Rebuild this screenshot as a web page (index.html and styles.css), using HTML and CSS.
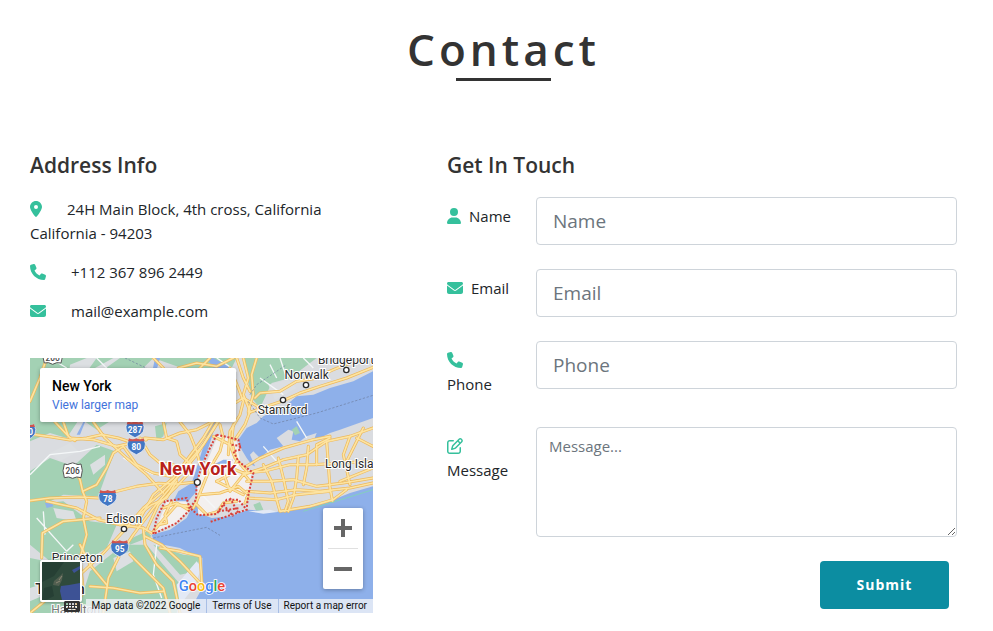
FILE: index.html
```html
<!DOCTYPE html>
<html lang="en">
<head>
<meta charset="utf-8">
<meta name="viewport" content="width=device-width, initial-scale=1">
<title>Contact</title>
<link rel="stylesheet" href="styles.css">
</head>
<body>
<svg class="sprite" aria-hidden="true">
  <symbol id="i-pin" viewBox="0 0 384 512"><path d="M215.7 499.2C267 435 384 279.4 384 192C384 86 298 0 192 0S0 86 0 192c0 87.4 117 243 168.3 307.2c12.3 15.3 35.1 15.3 47.4 0zM192 128a64 64 0 1 1 0 128 64 64 0 1 1 0-128z"/></symbol>
  <symbol id="i-phone" viewBox="0 0 512 512"><path d="M164.9 24.6c-7.7-18.6-28-28.5-47.4-23.2l-88 24C12.1 30.2 0 46 0 64C0 311.4 200.6 512 448 512c18 0 33.8-12.1 38.6-29.5l24-88c5.3-19.4-4.6-39.7-23.2-47.4l-96-40c-16.3-6.8-35.2-2.1-46.3 11.6L304.7 368C234.3 334.7 177.3 277.7 144 207.3L193.3 167c13.7-11.2 18.4-30 11.6-46.3l-40-96z"/></symbol>
  <symbol id="i-mail" viewBox="0 0 512 512"><path d="M48 64C21.5 64 0 85.5 0 112c0 15.1 7.1 29.3 19.2 38.4L236.8 313.6c11.4 8.5 27 8.5 38.4 0L492.8 150.4c12.1-9.1 19.2-23.3 19.2-38.4c0-26.5-21.5-48-48-48H48zM0 176V384c0 35.3 28.7 64 64 64H448c35.3 0 64-28.7 64-64V176L294.4 339.2c-22.8 17.1-54 17.1-76.8 0L0 176z"/></symbol>
  <symbol id="i-user" viewBox="0 0 448 512"><path d="M224 256A128 128 0 1 0 224 0a128 128 0 1 0 0 256zm-45.7 48C79.8 304 0 383.8 0 482.3C0 498.7 13.3 512 29.7 512H418.3c16.4 0 29.7-13.3 29.7-29.7C448 383.8 368.2 304 269.7 304H178.3z"/></symbol>
  <symbol id="i-edit" viewBox="0 0 512 512"><path d="M441 58.9L453.1 71c9.4 9.4 9.4 24.6 0 33.9L424 134.1 377.9 88 407 58.9c9.4-9.4 24.6-9.4 33.9 0zM209.8 256.2L344 121.9 390.1 168 255.8 302.2c-2.9 2.9-6.5 5-10.4 6.1l-58.5 16.7 16.7-58.5c1.1-3.9 3.2-7.5 6.1-10.4zM373.1 25L175.8 222.2c-8.7 8.7-15 19.4-18.3 31.1l-28.6 100c-2.4 8.4-.1 17.4 6.1 23.6s15.2 8.5 23.6 6.1l100-28.6c11.8-3.4 22.5-9.7 31.1-18.3L487 138.9c28.1-28.1 28.1-73.7 0-101.8L474.9 25C446.8-3.1 401.2-3.1 373.1 25zM88 64C39.4 64 0 103.4 0 152V424c0 48.6 39.4 88 88 88H360c48.6 0 88-39.4 88-88V312c0-13.3-10.7-24-24-24s-24 10.7-24 24V424c0 22.1-17.9 40-40 40H88c-22.1 0-40-17.9-40-40V152c0-22.1 17.9-40 40-40H200c13.3 0 24-10.7 24-24s-10.7-24-24-24H88z"/></symbol>
</svg>

<main class="contact">
  <header class="contact-head">
    <h1>Contact</h1>
    <span class="rule"></span>
  </header>

  <div class="columns">
    <section class="address">
      <h2>Address Info</h2>
      <p><svg class="icon narrow"><use href="#i-pin"/></svg>24H Main Block, 4th cross, California<br>California - 94203</p>
      <p><svg class="icon"><use href="#i-phone"/></svg>+112 367 896 2449</p>
      <p><svg class="icon"><use href="#i-mail"/></svg>mail@example.com</p>

      <div class="map">
        <svg class="map-art" viewBox="0 0 1029 765" preserveAspectRatio="xMidYMid slice" role="img" aria-label="Map of New York">
          <defs>
            <g id="shield">
              <path d="M-22-20Q-11-14 0-20Q11-14 22-20Q31-5 25 8Q18 20 0 27Q-18 20-25 8Q-31-5-22-20Z" fill="#4277c4" stroke="#fff" stroke-width="2"/>
              <path d="M-22-22Q-11-16 0-22Q11-16 22-22L25-13H-25Z" fill="#cf554f"/>
            </g>
            <g id="roads" fill="none" stroke-linejoin="round" stroke-linecap="round">
              <path d="M0 228L60 236L120 246L170 240L215 230L265 240L310 255L345 240L400 245L450 225L500 215L550 190"/>
              <path d="M100 192L115 235L135 248M0 130L30 60L50 0M75 192L120 240L190 245L260 265L350 245"/>
              <path d="M0 428L60 420L150 417L205 420L260 400L320 385L385 376L440 378L500 372"/>
              <path d="M50 430L140 450L205 485L270 500L340 510L365 525"/>
              <path d="M125 320L150 365L158 400L200 380L230 330L250 285L280 265L320 320L370 345L420 355"/>
              <path d="M158 400L170 430L160 480L170 530L150 600L160 700L130 765M35 600L37 525L100 490L210 480"/>
              <path d="M0 765L80 700L150 650L220 585L280 520L340 450L400 400L450 350L500 290L550 215L590 150L640 120L690 150"/>
              <path d="M220 765L235 660L270 590L310 530L370 450L420 390L460 330L520 260L570 180"/>
              <path d="M320 500L370 410L430 360L475 300L520 240L550 190M350 515L385 440L440 385L490 330"/>
              <path d="M270 500L320 475L365 440L410 420L440 370M340 510L345 560L380 620L430 670L450 765M345 535L395 560L450 610L515 680M300 590L350 640L400 690L420 765"/>
              <path d="M180 685L250 690L330 705L400 700M150 560L180 620L230 680M390 570L450 580L510 595L517 690"/>
              <path d="M190 192L225 240L290 300L350 350L400 405M400 192L410 240L440 250L450 290L490 325M330 240L360 290L390 315L430 320M450 192L480 230L500 280L510 320"/>
              <path d="M370 0L400 30M445 30L500 15L560 25L610 0M510 30L540 0M600 30L625 90L640 130L630 170L600 220L595 290"/>
              <path d="M640 0L655 60L640 110L660 160L645 200L615 245M680 0L665 50L670 110L655 160M620 0L640 60L660 100"/>
              <path d="M655 165L710 145L760 128L810 105L870 85L950 60L1029 28M675 120L690 105L750 100L800 70L850 62L910 35L960 15"/>
              <path d="M570 200L580 240L570 280L540 330L520 380L500 430L490 450M610 200L605 250L620 310L600 350L560 370M550 235L600 260L615 300L650 340"/>
              <path d="M545 320L590 325L640 345L660 370M510 410L570 405L625 385L655 410L645 435M560 370L600 390L640 410M575 330L600 400L640 350M500 440L530 470L565 460L580 435L620 430"/>
              <path d="M640 350L700 330L760 305L830 290L890 250L960 235L1029 210M640 345L700 340L780 320L850 320L930 315L1029 310"/>
              <path d="M650 370L720 370L790 365L860 385L940 375L1029 360M650 400L720 405L800 395L870 400L960 390L1029 375M650 420L740 425L800 410L900 400"/>
              <path d="M700 320L725 370L740 425L750 460M745 300L760 360L775 430L765 460M835 265L830 330L820 380M890 250L895 320L900 390L908 430M960 235L940 290L960 380M1000 210L970 270L950 310M805 295L800 360L790 420L775 460M750 460L840 445L910 425L950 395"/>
              <path d="M640 330L690 300L760 270L850 245L900 235M860 320L860 260L900 240M930 370L1029 330M980 240L1029 265"/>
              <path d="M370 520L400 485L440 440L480 445M385 500L410 495L405 470L425 430M400 450L440 435L475 455"/>
            </g>
          </defs>
          <rect width="1029" height="765" fill="#dadce0"/>
          <g fill="#a3d1b4">
            <path d="M0 0H370L330 40L300 100L240 190L200 215L150 180L110 240L60 225L0 250Z"/>
            <path d="M370 0H620L600 40L500 50L440 25Z M640 0H860L780 60L725 75L690 150L665 120Z"/>
            <path d="M0 340L60 300L130 325L200 260L255 280L230 345L205 415L100 410L0 460Z"/>
            <path d="M0 440L100 430L180 490L260 500L230 570L150 620L60 610L0 560Z"/>
            <path d="M180 640L280 560L350 560L400 620L460 690L440 765H140Z M0 600L100 620L160 660L100 765H0Z"/>
            <path d="M370 560L460 590L510 595L500 640L450 650Z M295 545L350 520L365 535L300 560Z"/>
            <path d="M375 205L410 195L400 235L380 250Z M395 325L410 310L418 335L400 345Z M670 440L690 432L700 455L680 462Z"/>
          </g>
          <g fill="#dcdfe2">
            <path d="M120 20L170 0H200L150 70L110 120ZM60 285L120 255L145 280L90 310ZM715 80L775 65L800 90L735 125ZM180 320L225 290L225 320L190 350Z"/>
            <path d="M70 450L130 460L140 490L80 480ZM250 600L300 580L310 610L260 640ZM0 690L60 670L70 700L0 730ZM195 30L250 0H270L220 35Z"/>
          </g>
          <g fill="#8eb0ea">
            <path d="M1029 40L970 70L900 90L850 110L800 115L765 145L700 175L680 195L650 210L625 245L635 275L650 300L665 320L675 325L660 290L670 280L690 300L720 275L760 265L740 240L775 215L790 220L785 245L810 250L830 235L860 225L850 250L900 225L930 215L1029 180Z"/>
            <path d="M365 530L420 515L470 480L490 440L500 425L505 465L545 480L600 475L655 455L740 462L800 450L910 425L960 405L1029 385V765H480L500 720L517 690V600L490 590L450 570L400 560L370 545Z"/>
            <path d="M540 192H560L535 270L505 345L500 400L470 435L430 430L445 400L485 375L500 330L525 250Z"/>
            <path d="M540 330L570 305L605 310L585 325L550 340ZM160 192L170 180L150 230L140 230ZM380 35L365 50L375 0H390ZM45 435L65 430L70 445L50 450ZM530 0H550L605 30H550Z"/>
          </g>
          <path d="M375 520L410 430L470 430L475 460L430 500ZM500 375L540 290L565 230L620 250L630 310L665 345L655 410L640 440L580 430L545 470L505 470Z" fill="#f3f0ef"/>
          <path d="M550 320L580 305H610L590 322Z" fill="#8eb0ea"/>
          <path d="M785 215L800 205L810 225L795 232Z" fill="#a3d1b4"/>
          <path d="M655 460L720 455L742 462L700 467ZM500 610L515 630L490 690L450 740L440 680Z" fill="#e3e9f5"/>
          <g fill="none" stroke="#f4f7f8" stroke-width="4">
            <path d="M0 350L60 290L150 280L210 265M200 0L250 50M40 460L45 530M110 580L130 560M280 300L330 330L370 350M380 560L370 650L395 720M520 415L555 450M800 190L830 240M700 265L740 310M690 60L760 110M720 20L740 60M560 0L620 40M20 480L110 580M750 0L770 60M820 0L850 30M60 0L110 30"/>
          </g>
          <use href="#roads" stroke="#edb95b" stroke-width="9"/>
          <use href="#roads" stroke="#fde4a2" stroke-width="5"/>
          <g fill="none" stroke="#6c7d9e" stroke-width="2" stroke-dasharray="7 5">
            <path d="M370 540L530 508L570 532M660 110L680 80L770 20M655 130L690 180L730 198L860 165L1029 112M285 0L380 45"/>
          </g>
          <g fill="none" stroke="#d9413b" stroke-width="6" stroke-dasharray="6 5">
            <path d="M370 528L380 480L405 430L470 420L480 455L440 495L370 528M560 230L535 280L515 325L500 375L498 425L480 450L505 472L560 468L590 425L625 425L650 455L540 492M560 230L625 245L632 275L610 280L625 310L670 345L655 410L650 450M565 460L630 450M580 440L610 475M600 420L625 465M605 260L635 265"/>
          </g>
          <path d="M820 460L1029 395" stroke="#84cfbd" stroke-width="3"/>
          <g class="shield-text">
            <use href="#shield" x="315" y="212"/><text x="315" y="225">287</text>
            <use href="#shield" x="319" y="263"/><text x="319" y="276">80</text>
            <use href="#shield" x="233" y="418"/><text x="233" y="431">78</text>
            <use href="#shield" x="269" y="569"/><text x="269" y="582">95</text>
            <use href="#shield" x="-10" y="220"/><text x="2" y="231">0</text>
          </g>
          <g class="route-text">
            <path d="M103 318Q112 322 120 317Q128 312 136 317Q144 322 153 318Q161 336 153 359Q140 354 128 361Q116 354 103 359Q95 338 103 318Z"/>
            <text x="128" y="348">206</text>
            <path d="M43-23Q68-15 93-23Q102-5 93 15Q80 11 68 19Q56 11 43 15Q34-5 43-23Z"/>
            <text x="68" y="8">206</text>
          </g>
          <g class="place">
            <text x="830" y="63">Norwalk</text><text x="758" y="168">Stamford</text><text x="948" y="18">Bridgeport</text>
            <text x="282" y="495">Edison</text><text x="142" y="612">Princeton</text><text x="885" y="331" class="start">Long Island</text>
            <text x="90" y="707" class="big">Trenton</text><text x="137" y="768" class="soft">Hamilton</text>
          </g>
          <g fill="#fff" stroke="#2b2b2b" stroke-width="4">
            <circle cx="828" cy="81" r="8"/><circle cx="759" cy="126" r="8"/><circle cx="949" cy="36" r="8"/><circle cx="282" cy="513" r="8"/><circle cx="502" cy="373" r="9"/>
          </g>
          <text class="city" x="504" y="351">New York</text>
          <text class="brand" x="446" y="699"><tspan fill="#4285f4">G</tspan><tspan fill="#ea4335">o</tspan><tspan fill="#fbbc05">o</tspan><tspan fill="#4285f4">g</tspan><tspan fill="#34a853">l</tspan><tspan fill="#ea4335">e</tspan></text>
        </svg>

        <div class="map-card">
          <strong>New York</strong>
          <a href="#map">View larger map</a>
        </div>
        <button class="map-thumb" type="button" aria-label="Satellite view">
          <svg viewBox="0 0 38 38"><rect width="38" height="38" fill="#2f4a3c"/><path d="M0 0H22L12 14L0 20ZM2 26L10 24L12 34L4 38H0Z" fill="#263f34"/><path d="M12 19L18 14L21 11L20 18L17 24L11 23Z" fill="#525f50"/><path d="M17 18L20 14M14 21L18 19" stroke="#8b8573"/><path d="M38 21L27 23L19 24L18 29L20 38H38ZM30 8L38 4V7L32 11Z" fill="#3d5295"/></svg>
        </button>
        <div class="map-zoom">
          <button type="button" aria-label="Zoom in"><svg viewBox="0 0 18 18"><path d="M7 0h4v7h7v4h-7v7H7v-7H0V7h7z"/></svg></button>
          <button type="button" aria-label="Zoom out"><svg viewBox="0 0 18 18"><path d="M0 7h18v4H0z"/></svg></button>
        </div>
        <div class="map-foot">
          <button type="button" aria-label="Keyboard shortcuts"><svg viewBox="0 0 16 11"><path fill-rule="evenodd" d="M1 0h14l1 1v9l-1 1H1l-1-1V1zM2 2v2h2V2zm3 0v2h2V2zm3 0v2h2V2zm3 0v2h2V2zM2 5v2h2V5zm3 0v2h2V5zm3 0v2h2V5zm3 0v2h2V5zM4 8v1h8V8z"/></svg></button>
          <span>Map data ©2022 Google</span>
          <a href="#terms">Terms of Use</a>
          <a href="#report">Report a map error</a>
        </div>
      </div>
    </section>

    <section class="touch">
      <h2>Get In Touch</h2>
      <form>
        <div class="row">
          <label for="name"><svg class="icon user"><use href="#i-user"/></svg>Name</label>
          <input id="name" type="text" placeholder="Name">
        </div>
        <div class="row">
          <label for="email"><svg class="icon"><use href="#i-mail"/></svg>Email</label>
          <input id="email" type="email" placeholder="Email">
        </div>
        <div class="row">
          <label for="phone"><svg class="icon"><use href="#i-phone"/></svg><br>Phone</label>
          <input id="phone" type="tel" placeholder="Phone">
        </div>
        <div class="row">
          <label for="message"><svg class="icon"><use href="#i-edit"/></svg><br>Message</label>
          <textarea id="message" placeholder="Message..."></textarea>
        </div>
        <button class="submit" type="submit">Submit</button>
      </form>
    </section>
  </div>
</main>
</body>
</html>
```
FILE: styles.css
```css
* { box-sizing: border-box; }

body {
  margin: 0;
  background: #fff;
  color: #212529;
  font: 15px/24px "Segoe UI", "Open Sans", "Noto Sans", sans-serif;
}

.sprite { display: none; }

.contact { padding: 20px 36px 18px 30px; }

.contact-head {
  display: flex;
  flex-direction: column;
  align-items: center;
  padding-left: 20px;
  margin-bottom: 68px;
}

h1 {
  margin: 0;
  color: #333;
  font-size: 44px;
  font-weight: 600;
  line-height: 58px;
  letter-spacing: 4px;
}

.rule {
  width: 95px;
  height: 3px;
  background: #333;
}

.columns {
  display: grid;
  grid-template-columns: 343fr 510fr;
  column-gap: 74px;
}

h2 {
  margin: 0 0 16px;
  color: #333;
  font-size: 21px;
  font-weight: 600;
  line-height: 32px;
}

p { margin: 0 0 15px; }

.icon {
  width: 16px;
  height: 16px;
  margin-right: 8px;
  fill: #35c09c;
  vertical-align: -2px;
}

.icon.user { width: 14px; }
.address .icon { margin-right: 25px; }
.address .icon.narrow { width: 12px; }

.map {
  position: relative;
  margin-top: 35px;
  overflow: hidden;
  font-family: Roboto, sans-serif;
}

.map-art {
  display: block;
  width: 100%;
}

.map-art text { text-anchor: middle; }
.shield-text { fill: #fff; font: 700 25px Roboto, sans-serif; }
.route-text { fill: #444; font: 500 25px Roboto, sans-serif; }
.route-text path { fill: #fff; stroke: #555; stroke-width: 3px; }

.place {
  fill: #2b2b2b;
  stroke: #fff;
  stroke-width: 6px;
  paint-order: stroke;
  font: 400 36px Roboto, sans-serif;
}

.map-art .start { text-anchor: start; }
.big { font-size: 43px; font-weight: 500; }
.soft { fill: #777; }

.city {
  fill: #b8211b;
  stroke: #fff;
  stroke-width: 8px;
  paint-order: stroke;
  font: 700 54px Roboto, sans-serif;
}

.map-art .brand {
  text-anchor: start;
  stroke: #fff;
  stroke-width: 5px;
  paint-order: stroke;
  font: 500 44px Roboto, sans-serif;
}

.map button {
  border: 0;
  padding: 0;
}

.map-card {
  position: absolute;
  top: 10px;
  left: 10px;
  display: flex;
  flex-direction: column;
  width: 196px;
  padding: 9px 12px 8px;
  background: #fff;
  border-radius: 2px;
  box-shadow: 0 1px 4px rgba(0, 0, 0, 0.3);
}

.map-card strong {
  color: #000;
  font-size: 14px;
  font-weight: 500;
  line-height: 19px;
}

.map-card a {
  color: #4272db;
  font-size: 12px;
  line-height: 18px;
  text-decoration: none;
}

.map .map-thumb {
  position: absolute;
  bottom: 11px;
  left: 10px;
  width: 42px;
  height: 42px;
  border: 2px solid #fff;
  border-radius: 2px;
  background: #fff;
  box-shadow: 0 1px 3px rgba(0, 0, 0, 0.3);
}

.map-thumb svg { display: block; width: 100%; }

.map-zoom {
  position: absolute;
  right: 10px;
  bottom: 24px;
  width: 40px;
  padding: 0 5px;
  background: #fff;
  border-radius: 2px;
  box-shadow: 0 1px 4px rgba(0, 0, 0, 0.3);
}

.map-zoom button {
  display: grid;
  place-items: center;
  width: 100%;
  height: 40px;
  background: none;
}

.map .map-zoom button + button { height: 41px; border-top: 1px solid #e0e0e0; }
.map-zoom svg { width: 18px; height: 18px; fill: #666; }

.map-foot {
  position: absolute;
  right: 0;
  bottom: 0;
  display: flex;
  height: 14px;
  font-size: 10px;
  line-height: 14px;
}

.map-foot span,
.map-foot a {
  padding: 0 6px 0 5px;
  background: rgba(240, 243, 248, 0.8);
  color: #111;
  text-decoration: none;
  white-space: nowrap;
}

.map-foot a { border-left: 1px solid #a8bee5; }

.map-foot button {
  width: 22px;
  background: none;
}

.map-foot svg { display: block; width: 16px; height: 11px; fill: #333; }

form { display: grid; }

.row {
  display: grid;
  grid-template-columns: 65px 1fr;
  align-items: start;
  column-gap: 24px;
  margin-bottom: 24px;
}

.row label { padding-top: 7px; white-space: nowrap; }
.row:nth-child(3) { min-height: 62px; }

input,
textarea {
  display: block;
  width: 100%;
  border: 1px solid #ced4da;
  border-radius: 4px;
  background: #fff;
  color: #495057;
  font-family: inherit;
}

input {
  height: 48px;
  padding: 8px 16px;
  font-size: 19px;
  line-height: 30px;
}

textarea {
  height: 110px;
  padding: 6px 12px;
  font-size: 15px;
  line-height: 24px;
  resize: vertical;
}

::placeholder { color: #6c757d; opacity: 1; }

.submit {
  justify-self: end;
  width: 129px;
  height: 48px;
  margin-right: 8px;
  border: 0;
  border-radius: 4px;
  background: #0c8da1;
  color: #fff;
  font: 700 14px/24px "Segoe UI", "Open Sans", "Noto Sans", sans-serif;
  letter-spacing: 1px;
}
```
